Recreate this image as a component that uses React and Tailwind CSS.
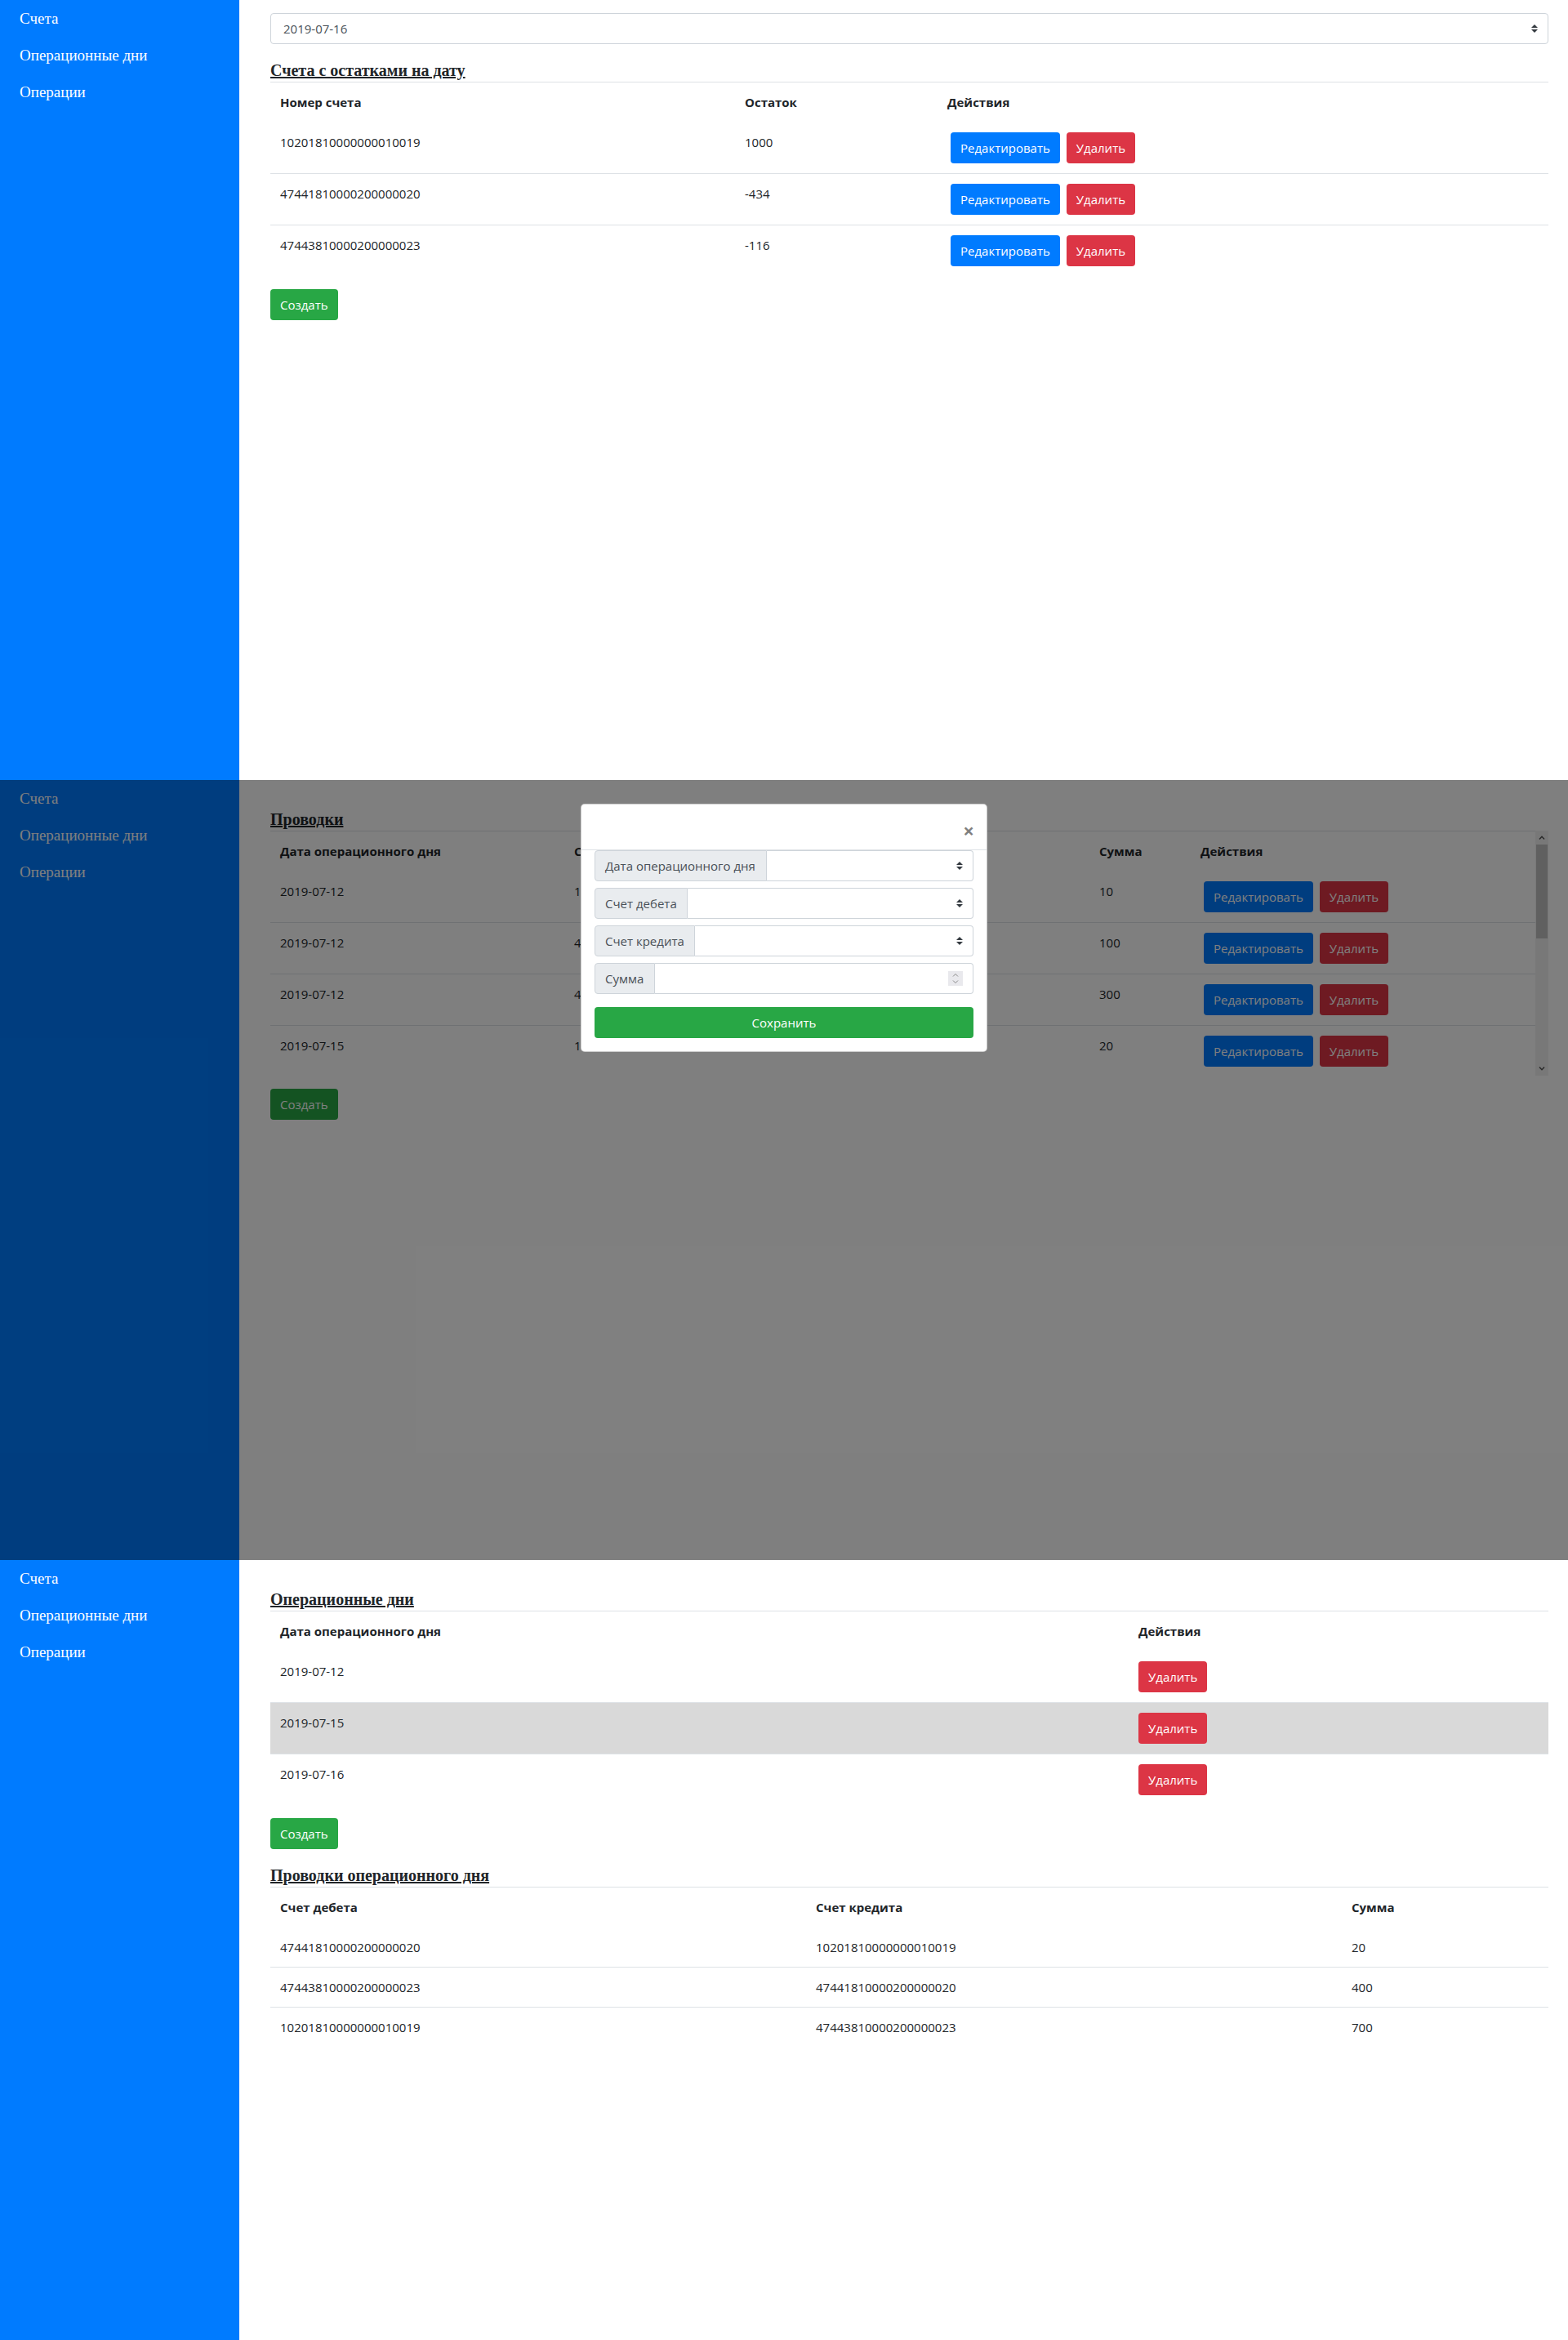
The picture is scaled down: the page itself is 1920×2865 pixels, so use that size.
import React from "react";

const sans = "font-['Open_Sans','Noto_Sans',sans-serif]";
const serif = "font-['Liberation_Serif','Times_New_Roman',serif]";

const btnColors = {
  blue: "bg-[#007bff]",
  red: "bg-[#dc3545]",
  green: "bg-[#28a745]",
};

function Btn({ color, children, className = "" }) {
  return (
    <button
      type="button"
      className={`h-[38px] rounded px-3 text-[15px] leading-6 text-white ${btnColors[color]} ${className}`}
    >
      {children}
    </button>
  );
}

function Sidebar() {
  return (
    <nav className={`flex w-[293px] shrink-0 flex-col bg-[#007bff] pl-6 ${serif}`}>
      {["Счета", "Операционные дни", "Операции"].map((item) => (
        <a key={item} className="h-[45px] text-[19px] leading-[45px] text-white">
          {item}
        </a>
      ))}
    </nav>
  );
}

function Heading({ children }) {
  return (
    <h5 className={`mt-5 mb-[2px] text-[20px] font-bold leading-6 text-[#212529] underline ${serif}`}>
      {children}
    </h5>
  );
}

function SelectArrow() {
  return (
    <svg width="8" height="10" viewBox="0 0 4 5">
      <path d="M2 0L0 2h4zm0 5L0 3h4z" fill="#343a40" />
    </svg>
  );
}

function HeadRow({ cols }) {
  return (
    <tr className="border-t border-[#dee2e6]">
      {cols.map((c) => (
        <th key={c} className="px-3 pt-3 pb-[13px] text-left font-bold">
          {c}
        </th>
      ))}
    </tr>
  );
}

function Actions({ edit = true }) {
  return (
    <div className={`flex gap-2 ${edit ? "ml-1" : ""}`}>
      {edit && <Btn color="blue">Редактировать</Btn>}
      <Btn color="red">Удалить</Btn>
    </div>
  );
}

// windows-style scrollbar beside the postings table (list is scrolled to top)
function ScrollBar() {
  return (
    <div className="flex w-4 shrink-0 flex-col bg-[#f1f1f1]">
      <div className="flex h-[17px] items-center justify-center">
        <svg width="8" height="5" viewBox="0 0 8 5" fill="none" stroke="#505050" strokeWidth="1.4">
          <path d="M1 4.5L4 1.2L7 4.5" />
        </svg>
      </div>
      <div className="mx-[1px] h-[115px] bg-[#c1c1c1]" />
      <div className="flex-1" />
      <div className="flex h-[17px] items-center justify-center">
        <svg width="8" height="5" viewBox="0 0 8 5" fill="none" stroke="#505050" strokeWidth="1.4">
          <path d="M1 0.5L4 3.8L7 0.5" />
        </svg>
      </div>
    </div>
  );
}

const accounts = [
  ["10201810000000010019", "1000"],
  ["47441810000200000020", "-434"],
  ["47443810000200000023", "-116"],
];

const postings = [
  ["2019-07-12", "10201810000000010019", "47441810000200000020", "10"],
  ["2019-07-12", "47441810000200000020", "47443810000200000023", "100"],
  ["2019-07-12", "47443810000200000023", "10201810000000010019", "300"],
  ["2019-07-15", "10201810000000010019", "47441810000200000020", "20"],
];

const days = ["2019-07-12", "2019-07-15", "2019-07-16"];

const dayPostings = [
  ["47441810000200000020", "10201810000000010019", "20"],
  ["47443810000200000023", "47441810000200000020", "400"],
  ["10201810000000010019", "47443810000200000023", "700"],
];

function InputGroup({ label, width, number }) {
  return (
    <div className="mb-2 flex h-[38px]">
      <span
        className={`flex items-center rounded-l border border-[#ced4da] bg-[#e9ecef] px-3 text-[15px] text-[#495057] ${width}`}
      >
        {label}
      </span>
      <div className="flex flex-1 items-center justify-end rounded-r border border-l-0 border-[#ced4da] bg-white pr-3">
        {number ? (
          <div className="flex h-[18px] w-[18px] items-center justify-center bg-[#e9e9ed]">
            <svg width="8" height="14" viewBox="0 0 8 14" fill="none" stroke="#8a8a8a" strokeWidth="1">
              <path d="M1 4.5L4 1.5L7 4.5M1 9.5L4 12.5L7 9.5" />
            </svg>
          </div>
        ) : (
          <SelectArrow />
        )}
      </div>
    </div>
  );
}

function Modal() {
  return (
    <div className="w-[498px] rounded-[5px] border border-black/20 bg-white">
      <div className="flex h-[56px] items-start justify-end border-b border-[#dee2e6] pt-[20px] pr-[15px]">
        <span className="text-[24px] font-bold leading-none text-black/50">×</span>
      </div>
      <div className="px-4 pb-4">
        <InputGroup label="Дата операционного дня" width="w-[211px]" />
        <InputGroup label="Счет дебета" width="w-[114px]" />
        <InputGroup label="Счет кредита" width="w-[123px]" />
        <InputGroup label="Сумма" width="w-[74px]" number />
        <button
          type="button"
          className="mt-2 h-[38px] w-full rounded bg-[#28a745] text-[15px] text-white"
        >
          Сохранить
        </button>
      </div>
    </div>
  );
}

export default function App() {
  return (
    <div className={`w-[1920px] text-[15px] leading-6 text-[#212529] ${sans}`}>
      {/* accounts */}
      <section className="flex h-[955px]">
        <Sidebar />
        <main className="flex-1 pl-[38px] pr-6 pt-4">
          <div className="flex h-[38px] items-center justify-between rounded border border-[#ced4da] pl-[15px] pr-3 text-[#495057]">
            <span>2019-07-16</span>
            <SelectArrow />
          </div>
          <Heading>Счета с остатками на дату</Heading>
          <table className="w-full table-fixed border-collapse">
            <colgroup>
              <col className="w-[569px]" />
              <col className="w-[248px]" />
              <col />
            </colgroup>
            <thead>
              <HeadRow cols={["Номер счета", "Остаток", "Действия"]} />
            </thead>
            <tbody>
              {accounts.map(([num, rest], i) => (
                <tr key={num} className={i ? "border-t border-[#dee2e6]" : ""}>
                  <td className="p-3 align-top">{num}</td>
                  <td className="p-3 align-top">{rest}</td>
                  <td className="p-3 align-top">
                    <Actions />
                  </td>
                </tr>
              ))}
            </tbody>
          </table>
          <Btn color="green" className="mt-4">
            Создать
          </Btn>
        </main>
      </section>

      {/* postings with modal open */}
      <section className="relative flex h-[955px]">
        <Sidebar />
        <main className="min-w-0 flex-1 pl-[38px] pr-6 pt-4">
          <Heading>Проводки</Heading>
          <div className="flex h-[300px]">
            <div className="min-w-0 flex-1 overflow-hidden">
              <table className="w-full table-fixed border-collapse">
                <colgroup>
                  <col className="w-[360px]" />
                  <col className="w-[319px]" />
                  <col className="w-[324px]" />
                  <col className="w-[124px]" />
                  <col />
                </colgroup>
                <thead>
                  <HeadRow cols={["Дата операционного дня", "Счет дебета", "Счет кредита", "Сумма", "Действия"]} />
                </thead>
                <tbody>
                  {postings.map(([date, debit, credit, sum], i) => (
                    <tr key={i} className={i ? "border-t border-[#dee2e6]" : ""}>
                      <td className="p-3 align-top">{date}</td>
                      <td className="p-3 align-top">{debit}</td>
                      <td className="p-3 align-top">{credit}</td>
                      <td className="p-3 align-top">{sum}</td>
                      <td className="p-3 align-top">
                        <Actions />
                      </td>
                    </tr>
                  ))}
                </tbody>
              </table>
            </div>
            <ScrollBar />
          </div>
          <Btn color="green" className="mt-4">
            Создать
          </Btn>
        </main>
        <div className="absolute inset-0 flex justify-center bg-black/50 pt-[29px]">
          <div>
            <Modal />
          </div>
        </div>
      </section>

      {/* operational days */}
      <section className="flex h-[955px]">
        <Sidebar />
        <main className="flex-1 pl-[38px] pr-6 pt-4">
          <Heading>Операционные дни</Heading>
          <table className="w-full table-fixed border-collapse">
            <colgroup>
              <col className="w-[1051px]" />
              <col />
            </colgroup>
            <thead>
              <HeadRow cols={["Дата операционного дня", "Действия"]} />
            </thead>
            <tbody>
              {days.map((d, i) => (
                <tr
                  key={d}
                  className={`${i ? "border-t border-[#dee2e6]" : ""} ${i === 1 ? "bg-[#d9d9d9]" : ""}`}
                >
                  <td className="p-3 align-top">{d}</td>
                  <td className="p-3 align-top">
                    <Actions edit={false} />
                  </td>
                </tr>
              ))}
            </tbody>
          </table>
          <Btn color="green" className="mt-4">
            Создать
          </Btn>
          <Heading>Проводки операционного дня</Heading>
          <table className="w-full table-fixed border-collapse">
            <colgroup>
              <col className="w-[656px]" />
              <col className="w-[656px]" />
              <col />
            </colgroup>
            <thead>
              <HeadRow cols={["Счет дебета", "Счет кредита", "Сумма"]} />
            </thead>
            <tbody>
              {dayPostings.map(([debit, credit, sum], i) => (
                <tr key={i} className={i ? "border-t border-[#dee2e6]" : ""}>
                  <td className="p-3 align-top">{debit}</td>
                  <td className="p-3 align-top">{credit}</td>
                  <td className="p-3 align-top">{sum}</td>
                </tr>
              ))}
            </tbody>
          </table>
        </main>
      </section>
    </div>
  );
}
